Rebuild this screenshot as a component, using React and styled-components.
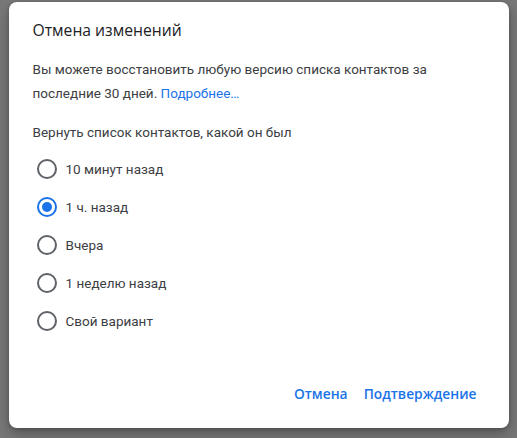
import React, { useState } from 'react'
import styled, { createGlobalStyle } from 'styled-components'

const GlobalStyle = createGlobalStyle`
  html, body {
    margin: 0;
    padding: 0;
    background: #787878;
  }
  body {
    font-family: Roboto, "Liberation Sans", sans-serif;
  }
`

const Backdrop = styled.div`
  width: 517px;
  height: 438px;
  display: flex;
  justify-content: center;
  align-items: flex-start;
  padding-top: 2px;
  box-sizing: border-box;
`

const Dialog = styled.div`
  width: 500px;
  height: 426px;
  box-sizing: border-box;
  background: #ffffff;
  border-radius: 8px;
  box-shadow: 0 6px 14px rgba(0, 0, 0, 0.28), 0 1px 4px rgba(0, 0, 0, 0.2);
  padding: 16px 24px 17px;
  display: flex;
  flex-direction: column;
`

const Title = styled.h2`
  margin: 0;
  font-family: "Open Sans", Roboto, sans-serif;
  font-size: 15.7px;
  font-weight: 400;
  line-height: 24px;
  color: #202124;
`

const Text = styled.p`
  margin: ${p => p.$top || 0}px 0 0;
  font-size: 13.5px;
  line-height: 24px;
  color: #3c4043;
`

const Link = styled.a`
  color: #1a73e8;
  text-decoration: none;
  cursor: pointer;
`

const Options = styled.div`
  margin-top: 6px;
  display: flex;
  flex-direction: column;
`

const Option = styled.label`
  height: 38px;
  display: flex;
  align-items: center;
  gap: 9px;
  padding-left: 4px;
  font-size: 13.5px;
  color: #3c4043;
  cursor: pointer;
`

const Radio = styled.span`
  width: 20px;
  height: 20px;
  box-sizing: border-box;
  border-radius: 50%;
  border: 2px solid ${p => (p.$checked ? '#1a73e8' : '#5f6368')};
  display: flex;
  align-items: center;
  justify-content: center;
  flex-shrink: 0;

  &::after {
    content: '';
    width: 10px;
    height: 10px;
    border-radius: 50%;
    background: #1a73e8;
    display: ${p => (p.$checked ? 'block' : 'none')};
  }
`

const Actions = styled.div`
  margin-top: auto;
  display: flex;
  justify-content: flex-end;
`

const Button = styled.button`
  height: 36px;
  padding: 0 8px;
  border: none;
  background: none;
  font-family: "Open Sans", Roboto, sans-serif;
  font-size: 13.8px;
  font-weight: 600;
  color: #1a73e8;
  cursor: pointer;
`

const options = ['10 минут назад', '1 ч. назад', 'Вчера', '1 неделю назад', 'Свой вариант']

export default function App() {
  const [selected, setSelected] = useState(1)

  return (
    <>
      <GlobalStyle />
      <Backdrop>
        <Dialog>
          <Title>Отмена изменений</Title>
          <Text $top={15}>
            <span>Вы можете восстановить любую версию списка контактов за последние 30 дней.&nbsp;</span>
            <Link>Подробнее…</Link>
          </Text>
          <Text $top={15}>Вернуть список контактов, какой он был</Text>
          <Options>
            {options.map((o, i) => (
              <Option key={o} onClick={() => setSelected(i)}>
                <Radio $checked={selected === i} />
                {o}
              </Option>
            ))}
          </Options>
          <Actions>
            <Button>Отмена</Button>
            <Button>Подтверждение</Button>
          </Actions>
        </Dialog>
      </Backdrop>
    </>
  )
}
